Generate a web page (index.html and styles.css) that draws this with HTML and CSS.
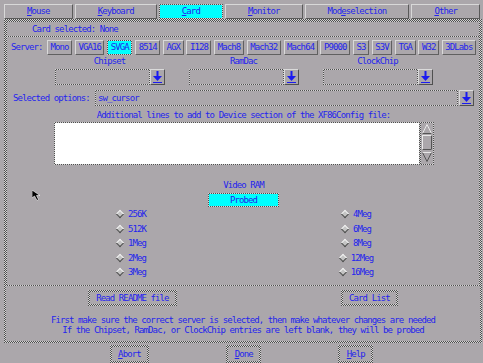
FILE: index.html
```html
<!DOCTYPE html>
<html lang="en">
<head>
    <meta charset="UTF-8">
    <title>XF86Setup - Card</title>
    <link rel="stylesheet" href="styles.css">
</head>
<body>
    <div class="tabs">
        <div class="tab"><u>M</u>ouse</div>
        <div class="tab"><u>K</u>eyboard</div>
        <div class="tab tab-active"><u>C</u>ard</div>
        <div class="tab"><u>M</u>onitor</div>
        <div class="tab">Mod<u>e</u>selection</div>
        <div class="tab"><u>O</u>ther</div>
    </div>

    <div class="panel">
        <div class="card-selected">Card selected: None</div>

        <div class="card-frame">
            <div class="server-row">
                <span class="server-label">Server:</span>
                <div class="server-list">
                    <button class="srv">Mono</button>
                    <button class="srv">VGA16</button>
                    <button class="srv srv-active">SVGA</button>
                    <button class="srv">8514</button>
                    <button class="srv">AGX</button>
                    <button class="srv">I128</button>
                    <button class="srv">Mach8</button>
                    <button class="srv">Mach32</button>
                    <button class="srv">Mach64</button>
                    <button class="srv">P9000</button>
                    <button class="srv">S3</button>
                    <button class="srv">S3V</button>
                    <button class="srv">TGA</button>
                    <button class="srv">W32</button>
                    <button class="srv">3DLabs</button>
                </div>
            </div>

            <div class="combos">
                <div class="combo">
                    <div class="combo-label">Chipset</div>
                    <div class="combo-field">
                        <div class="entry"></div>
                        <button class="drop"><svg width="15" height="16" viewBox="0 0 15 16"><rect x="6.5" y="2" width="2" height="7"/><polygon points="3,7 12,7 7.5,12"/><rect x="3" y="13" width="9" height="1"/></svg></button>
                    </div>
                </div>
                <div class="combo">
                    <div class="combo-label">RamDac</div>
                    <div class="combo-field">
                        <div class="entry"></div>
                        <button class="drop"><svg width="15" height="16" viewBox="0 0 15 16"><rect x="6.5" y="2" width="2" height="7"/><polygon points="3,7 12,7 7.5,12"/><rect x="3" y="13" width="9" height="1"/></svg></button>
                    </div>
                </div>
                <div class="combo">
                    <div class="combo-label">ClockChip</div>
                    <div class="combo-field">
                        <div class="entry"></div>
                        <button class="drop"><svg width="15" height="16" viewBox="0 0 15 16"><rect x="6.5" y="2" width="2" height="7"/><polygon points="3,7 12,7 7.5,12"/><rect x="3" y="13" width="9" height="1"/></svg></button>
                    </div>
                </div>
            </div>

            <div class="options-row">
                <span class="options-label">Selected options:</span>
                <div class="entry entry-wide">sw_cursor</div>
                <button class="drop"><svg width="15" height="16" viewBox="0 0 15 16"><rect x="6.5" y="2" width="2" height="7"/><polygon points="3,7 12,7 7.5,12"/><rect x="3" y="13" width="9" height="1"/></svg></button>
            </div>

            <div class="extra-label">Additional lines to add to Device section of the XF86Config file:</div>
            <div class="extra">
                <div class="extra-text"></div>
                <div class="scrollbar">
                    <svg width="12" height="41" viewBox="0 0 12 41">
                        <polygon points="6,1.5 10.5,10.5 1.5,10.5" fill="none" stroke="#e8e8e8"/>
                        <polyline points="10.5,10.5 1.5,10.5" fill="none" stroke="#555"/>
                        <rect x="1.5" y="12.5" width="9" height="14" fill="none" stroke="#e8e8e8"/>
                        <polyline points="10.5,12.5 10.5,26.5 1.5,26.5" fill="none" stroke="#555"/>
                        <polygon points="1.5,29.5 10.5,29.5 6,38.5" fill="none" stroke="#555"/>
                        <polyline points="1.5,29.5 10.5,29.5" fill="none" stroke="#e8e8e8"/>
                    </svg>
                </div>
            </div>

            <div class="ram-label">Video RAM</div>
            <button class="probed">Probed</button>
            <div class="ram-grid">
                <label class="ram"><span class="diamond"></span>256K</label>
                <label class="ram"><span class="diamond"></span>512K</label>
                <label class="ram"><span class="diamond"></span>1Meg</label>
                <label class="ram"><span class="diamond"></span>2Meg</label>
                <label class="ram"><span class="diamond"></span>3Meg</label>
                <label class="ram"><span class="diamond"></span>4Meg</label>
                <label class="ram"><span class="diamond"></span>6Meg</label>
                <label class="ram"><span class="diamond"></span>8Meg</label>
                <label class="ram"><span class="diamond"></span>12Meg</label>
                <label class="ram"><span class="diamond"></span>16Meg</label>
            </div>
        </div>

        <div class="actions">
            <div class="action-buttons">
                <button class="btn">Read README file</button>
                <button class="btn">Card List</button>
            </div>
            <p class="hint">First make sure the correct server is selected, then make whatever changes are needed<br>
            If the Chipset, RamDac, or ClockChip entries are left blank, they will be probed</p>
        </div>
    </div>

    <div class="dialog-buttons">
        <button class="btn btn-dialog"><u>A</u>bort</button>
        <button class="btn btn-dialog"><u>D</u>one</button>
        <button class="btn btn-dialog"><u>H</u>elp</button>
    </div>

    <!-- mouse pointer caught in the screenshot -->
    <svg class="pointer" width="11" height="11" viewBox="0 0 11 11">
        <polygon points="0,0 0,8 2.5,6 5,10.5 6.5,9.5 4.5,5.5 8,5.5" fill="#000" stroke="#fff" stroke-width="0.6"/>
    </svg>
</body>
</html>
```

FILE: styles.css
```css
:root {
    --gray: #aba7ab;
    --blue: #2424ee;
    --checker: repeating-conic-gradient(#4e4e4e 0 25%, #d4d4d4 0 50%) 0 0 / 2px 2px border-box;
}

* {
    box-sizing: border-box;
}

body {
    margin: 0;
    width: 483px;
    height: 363px;
    overflow: hidden;
    position: relative;
    background-color: var(--gray);
    color: var(--blue);
    font-family: "DejaVu Sans Mono", "Liberation Mono", monospace;
    font-size: 9px;
    letter-spacing: -0.9px;
}

button {
    font: inherit;
    color: inherit;
    letter-spacing: inherit;
    margin: 0;
    padding: 0;
    background: none;
    border: none;
}

u {
    text-underline-offset: 1px;
}

/* tab bar */
.tabs {
    display: flex;
    gap: 2px;
    height: 19px;
    padding: 4px 3px 0 4px;
}

.tab {
    flex: 1 1 auto;
    height: 15px;
    line-height: 13px;
    text-align: center;
    white-space: nowrap;
    border: 1px solid;
    border-color: #d8d8d8 #5a5a5a #5a5a5a #d8d8d8;
}

.tab-active {
    border: 1px solid transparent;
    background: linear-gradient(#00ffff, #00ffff) padding-box, var(--checker);
}

/* main panel */
.panel {
    margin-left: 4px;
    width: 478px;
    height: 324px;
    border: 2px solid transparent;
    background: linear-gradient(var(--gray), var(--gray)) padding-box, var(--checker);
}

.card-selected {
    height: 16px;
    line-height: 14px;
    padding-left: 25px;
    border: 1px solid transparent;
    background: linear-gradient(var(--gray), var(--gray)) padding-box, var(--checker);
}

.card-frame {
    height: 249px;
    padding: 2px 3px 0 4px;
    border: 1px solid transparent;
    border-top: none;
    background: linear-gradient(var(--gray), var(--gray)) padding-box, var(--checker);
}

.server-row {
    display: flex;
    height: 15px;
    margin-top: 1px;
}

.server-label {
    width: 36px;
    line-height: 15px;
}

.server-list {
    flex: 1;
    display: flex;
    justify-content: space-between;
}

.srv {
    height: 15px;
    line-height: 13px;
    padding: 0 2.5px;
    border: 1px solid;
    border-color: #dadada #606060 #606060 #dadada;
    white-space: nowrap;
}

.srv-active {
    border: 1px solid transparent;
    background: linear-gradient(#00ffff, #00ffff) padding-box, var(--checker);
}

/* chipset / ramdac / clockchip */
.combos {
    display: flex;
    justify-content: center;
    gap: 24px;
    margin-top: 1px;
}

.combo {
    width: 110px;
}

.combo-label {
    height: 11px;
    line-height: 11px;
    text-align: center;
    margin-bottom: 2px;
}

.combo-field {
    display: flex;
    height: 16px;
}

.entry {
    flex: 1;
    border: 1px solid transparent;
    background: linear-gradient(var(--gray), var(--gray)) padding-box, var(--checker);
}

.drop {
    width: 15px;
    height: 16px;
    border: 1px solid;
    border-color: #dadada #505050 #505050 #dadada;
    display: flex;
    align-items: center;
    justify-content: center;
}

.drop svg {
    fill: #1a1af0;
    margin: -1px;
}

.options-row {
    display: flex;
    gap: 1px;
    height: 16px;
    margin-top: 5px;
    padding: 0 2px;
}

.options-label {
    width: 81px;
    line-height: 16px;
    white-space: nowrap;
}

.entry-wide {
    line-height: 14px;
    padding-left: 2px;
}

/* additional lines text box */
.extra-label {
    margin-top: 4px;
    height: 11px;
    line-height: 11px;
    text-align: center;
}

.extra {
    display: flex;
    justify-content: center;
    height: 43px;
    margin-top: 1px;
}

.extra-text {
    width: 366px;
    border: 1px solid transparent;
    background: linear-gradient(#fff, #fff) padding-box, var(--checker);
}

.scrollbar {
    width: 14px;
    border: 1px solid transparent;
    background: linear-gradient(var(--gray), var(--gray)) padding-box, var(--checker);
}

.scrollbar svg {
    display: block;
}

/* video ram */
.ram-label {
    margin-top: 15px;
    height: 11px;
    line-height: 11px;
    text-align: center;
}

.probed {
    display: block;
    width: 71px;
    height: 14px;
    line-height: 12px;
    margin: 2px auto 0;
    border: 1px solid transparent;
    background: linear-gradient(#00ffff, #00ffff) padding-box, var(--checker);
}

.ram-grid {
    display: grid;
    grid-template-columns: 225px 225px;
    grid-template-rows: repeat(5, 14.5px);
    grid-auto-flow: column;
    justify-content: center;
}

.ram {
    display: flex;
    align-items: center;
    justify-content: center;
    gap: 4px;
}

.diamond {
    width: 6px;
    height: 6px;
    margin: 0 1px;
    transform: rotate(45deg);
    background-color: #c4c4c4;
    border: 1px solid;
    border-color: #f0f0f0 #4a4a4a #4a4a4a #f0f0f0;
}

/* bottom of the panel */
.actions {
    padding-top: 4px;
}

.action-buttons {
    display: flex;
    justify-content: space-around;
}

.btn {
    height: 16px;
    line-height: 12px;
    padding: 0 6.5px;
    white-space: nowrap;
    border: 2px solid transparent;
    background: linear-gradient(var(--gray), var(--gray)) padding-box, var(--checker);
}

.hint {
    margin: 9px 0 0;
    line-height: 10px;
    text-align: center;
    white-space: nowrap;
}

.dialog-buttons {
    display: flex;
    justify-content: center;
    gap: 77px;
    margin-top: 2px;
}

.btn-dialog {
    height: 18px;
    line-height: 14px;
}

.pointer {
    position: absolute;
    left: 32px;
    top: 190px;
}
```
